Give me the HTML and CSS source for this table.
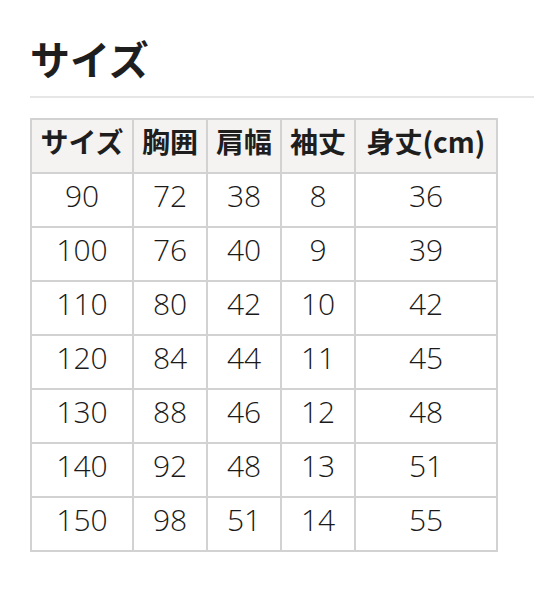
FILE: index.html
```html
<!DOCTYPE html>
<html lang="ja">
<head>
<meta charset="utf-8">
<link rel="stylesheet" href="styles.css">
</head>
<body>
<div class="page">
  <h2 class="title">サイズ</h2>
  <table class="size-table">
    <thead>
      <tr>
        <th class="c1">サイズ</th>
        <th class="c2">胸囲</th>
        <th class="c3">肩幅</th>
        <th class="c4">袖丈</th>
        <th class="c5">身丈(cm)</th>
      </tr>
    </thead>
    <tbody>
      <tr><td>90</td><td>72</td><td>38</td><td>8</td><td>36</td></tr>
      <tr><td>100</td><td>76</td><td>40</td><td>9</td><td>39</td></tr>
      <tr><td>110</td><td>80</td><td>42</td><td>10</td><td>42</td></tr>
      <tr><td>120</td><td>84</td><td>44</td><td>11</td><td>45</td></tr>
      <tr><td>130</td><td>88</td><td>46</td><td>12</td><td>48</td></tr>
      <tr><td>140</td><td>92</td><td>48</td><td>13</td><td>51</td></tr>
      <tr><td>150</td><td>98</td><td>51</td><td>14</td><td>55</td></tr>
    </tbody>
  </table>
</div>
</body>
</html>
```
FILE: styles.css
```css
html, body {
  margin: 0;
  padding: 0;
  background: #ffffff;
}

.page {
  padding-left: 30px;
  font-family: "Noto Sans CJK JP", "Noto Sans", sans-serif;
  color: #222222;
}

.title {
  margin: 0;
  padding: 38px 0 18px;
  font-size: 40px;
  line-height: 40px;
  font-weight: 700;
  color: #1e1e1e;
  border-bottom: 2px solid #e6e6e6;
}

.size-table {
  margin-top: 20px;
  border-collapse: separate;
  border-spacing: 0;
  border-top: 2px solid #d2d2d2;
  border-left: 2px solid #d2d2d2;
}

.size-table th,
.size-table td {
  padding: 0;
  text-align: center;
  vertical-align: top;
  border-right: 2px solid #d2d2d2;
  border-bottom: 2px solid #d2d2d2;
}

.size-table th {
  height: 42px;
  line-height: 42px;
  padding-bottom: 10px;
  background: #f4f3f1;
  font-size: 28px;
  font-weight: 700;
  color: #1e1e1e;
}

.size-table td {
  height: 44px;
  line-height: 44px;
  padding-bottom: 8px;
  font-family: "Open Sans", "Noto Sans", sans-serif;
  font-size: 30px;
  font-weight: 350;
  color: #1a1a1a;
}

.c1 { width: 100px; }
.c2 { width: 72px; }
.c3 { width: 72px; }
.c4 { width: 72px; }
.c5 { width: 140px; }
```
